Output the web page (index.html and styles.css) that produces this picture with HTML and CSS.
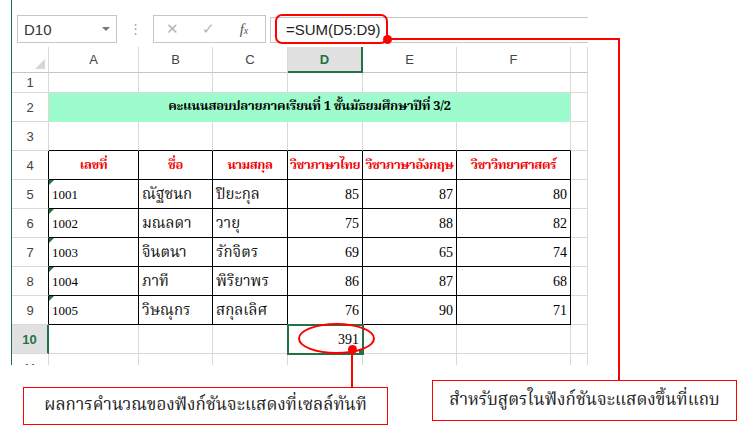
FILE: index.html
```html
<!DOCTYPE html>
<html lang="th">

<head>
    <meta charset="UTF-8">
    <meta name="viewport" content="width=device-width, initial-scale=1.0">
    <title>ฟังก์ชัน SUM</title>
    <link rel="stylesheet" href="styles.css">
</head>

<body>
    <div class="page">
        <div class="sheet">
            <div class="formula-row">
                <div class="name-box"><span>D10</span><span class="drop"></span></div>
                <div class="grip">&#8942;</div>
                <div class="fn-buttons">
                    <span class="btn-cancel">&#10005;</span>
                    <span class="btn-enter">&#10003;</span>
                    <span class="btn-fx"><i>f</i><sub>x</sub></span>
                </div>
                <div class="formula-input">=SUM(D5:D9)</div>
            </div>
            <table class="grid">
                <colgroup>
                    <col style="width: 37px">
                    <col style="width: 90px">
                    <col style="width: 74px">
                    <col style="width: 75px">
                    <col style="width: 75px">
                    <col style="width: 94px">
                    <col style="width: 114px">
                    <col style="width: 17px">
                </colgroup>
                <tr class="col-heads">
                    <th class="corner"><span></span></th>
                    <th>A</th>
                    <th>B</th>
                    <th>C</th>
                    <th class="active">D</th>
                    <th>E</th>
                    <th>F</th>
                    <th></th>
                </tr>
                <tr class="short">
                    <th>1</th>
                    <td></td><td></td><td></td><td></td><td></td><td></td><td></td>
                </tr>
                <tr>
                    <th>2</th>
                    <td colspan="6" class="title">คะแนนสอบปลายภาคเรียนที่ 1 ชั้นมัธยมศึกษาปีที่ 3/2</td>
                    <td></td>
                </tr>
                <tr class="above-box">
                    <th>3</th>
                    <td></td><td></td><td></td><td></td><td></td><td></td><td></td>
                </tr>
                <tr class="box head">
                    <th>4</th>
                    <td>เลขที่</td>
                    <td>ชื่อ</td>
                    <td>นามสกุล</td>
                    <td>วิชาภาษาไทย</td>
                    <td>วิชาภาษาอังกฤษ</td>
                    <td>วิชาวิทยาศาสตร์</td>
                    <td class="out"></td>
                </tr>
                <tr class="box">
                    <th>5</th>
                    <td class="id">1001</td><td>ณัฐชนก</td><td>ปิยะกุล</td>
                    <td class="num">85</td><td class="num">87</td><td class="num">80</td>
                    <td class="out"></td>
                </tr>
                <tr class="box">
                    <th>6</th>
                    <td class="id">1002</td><td>มณลดา</td><td>วายุ</td>
                    <td class="num">75</td><td class="num">88</td><td class="num">82</td>
                    <td class="out"></td>
                </tr>
                <tr class="box">
                    <th>7</th>
                    <td class="id">1003</td><td>จินตนา</td><td>รักจิตร</td>
                    <td class="num">69</td><td class="num">65</td><td class="num">74</td>
                    <td class="out"></td>
                </tr>
                <tr class="box">
                    <th>8</th>
                    <td class="id">1004</td><td>ภาที</td><td>พิริยาพร</td>
                    <td class="num">86</td><td class="num">87</td><td class="num">68</td>
                    <td class="out"></td>
                </tr>
                <tr class="box">
                    <th>9</th>
                    <td class="id">1005</td><td>วิษณุกร</td><td>สกุลเลิศ</td>
                    <td class="num">76</td><td class="num">90</td><td class="num">71</td>
                    <td class="out"></td>
                </tr>
                <tr>
                    <th class="active">10</th>
                    <td></td><td></td><td></td>
                    <td class="num selected">391</td>
                    <td></td><td></td><td></td>
                </tr>
                <tr>
                    <th>11</th>
                    <td></td><td></td><td></td><td></td><td></td><td></td><td></td>
                </tr>
            </table>
        </div>

        <!-- callouts drawn on top of the sheet -->
        <div class="mark formula-mark"></div>
        <div class="dot formula-dot"></div>
        <div class="wire wire-top"></div>
        <div class="wire wire-right"></div>
        <div class="note note-right">สำหรับสูตรในฟังก์ชันจะแสดงขึ้นที่แถบ</div>

        <div class="mark result-mark"></div>
        <div class="dot result-dot"></div>
        <div class="wire wire-down"></div>
        <div class="note note-left">ผลการคำนวณของฟังก์ชันจะแสดงที่เซลล์ทันที</div>
    </div>
</body>

</html>
```

FILE: styles.css
```css
body {
    margin: 0;
    background-color: white;
    font-family: "Liberation Sans", Arial, sans-serif;
}

.page {
    position: relative;
    width: 741px;
    height: 427px;
    overflow: hidden;
}

.sheet {
    margin-left: 11px;
    width: 576px;
    height: 365px;
    border-left: 1px solid #217346;
    overflow: hidden;
}

/* formula bar */
.formula-row {
    display: flex;
    align-items: flex-start;
    height: 47px;
    padding-top: 15px;
    box-sizing: border-box;
}

.name-box {
    display: flex;
    align-items: center;
    margin-left: 5px;
    width: 100px;
    height: 28px;
    padding-left: 6px;
    box-sizing: border-box;
    border: 1px solid #c6c6c6;
    font-size: 15px;
    color: #333;
}

.drop {
    margin-left: auto;
    margin-right: 6px;
    border-left: 4px solid transparent;
    border-right: 4px solid transparent;
    border-top: 4px solid #777;
}

.grip {
    width: 36px;
    line-height: 28px;
    text-align: center;
    color: #aaa;
    font-size: 13px;
}

.fn-buttons {
    display: flex;
    align-items: center;
    width: 113px;
    height: 28px;
    box-sizing: border-box;
    border: 1px solid #c6c6c6;
}

.fn-buttons span {
    width: 36px;
    text-align: center;
    color: #b5b5b5;
    font-size: 15px;
}

.fn-buttons .btn-fx {
    color: #555;
    font-family: "Liberation Serif", serif;
    font-size: 15px;
}

.btn-fx sub {
    font-style: italic;
    font-size: 10px;
    vertical-align: 0;
}

.formula-input {
    margin-left: 4px;
    width: 318px;
    height: 26px;
    margin-top: 2px;
    padding-left: 15px;
    box-sizing: border-box;
    border-top: 1px solid #c6c6c6;
    border-bottom: 1px solid #c6c6c6;
    border-left: 1px solid #c6c6c6;
    line-height: 24px;
    font-size: 15px;
    color: #222;
}

/* grid */
.grid {
    table-layout: fixed;
    width: 576px;
    border-collapse: separate;
    border-spacing: 0;
}

.grid th,
.grid td {
    padding: 0 3px;
    height: 29px;
    box-sizing: border-box;
    border-right: 1px solid #d9d9d9;
    border-bottom: 1px solid #d9d9d9;
    white-space: nowrap;
    overflow: hidden;
}

.grid th {
    font-weight: normal;
    font-size: 13px;
    color: #444;
    text-align: center;
    padding: 0;
}

.col-heads th {
    height: 26px;
    border-bottom-color: #c6c6c6;
}

.col-heads th.active,
.grid th.active {
    background-color: #e1e1e1;
    color: #217346;
    font-weight: bold;
}

.col-heads th.active {
    border-bottom: 2px solid #217346;
}

.grid tr th.active {
    border-right: 2px solid #217346;
}

.corner {
    position: relative;
}

.corner span {
    position: absolute;
    right: 3px;
    bottom: 3px;
    border-left: 10px solid transparent;
    border-bottom: 10px solid #d6d6d6;
}

.grid tr.short th,
.grid tr.short td {
    height: 20px;
}

.grid td {
    font-family: "Noto Serif Thai", "Noto Sans Thai", "Liberation Serif", serif;
    font-size: 15px;
    line-height: 1.2;
    color: #111;
    vertical-align: middle;
    padding-top: 2px;
}

.grid td.title {
    background-color: #9dfccb;
    border-bottom-color: #9dfccb;
    text-align: center;
    font-weight: bold;
    font-size: 13px;
    letter-spacing: -0.3px;
    color: #000;
    padding: 0;
}

/* black box round rows 4-9 */
.above-box td:not(:last-child) {
    border-bottom-color: #000;
}

.box th {
    border-right-color: #000;
}

.box td:not(.out) {
    border-right-color: #000;
    border-bottom-color: #000;
}

.box td.id {
    position: relative;
    font-family: "Liberation Serif", serif;
    font-size: 13px;
    color: #000;
}

.box td.id::before {
    content: '';
    position: absolute;
    left: 0;
    top: 0;
    border-right: 5px solid transparent;
    border-top: 5px solid #217346;
}

.head td {
    color: #f20000;
    font-weight: bold;
    text-align: center;
    font-size: 13px;
    letter-spacing: -0.5px;
    padding: 1px 0 0 0;
}

.grid td.num {
    text-align: right;
    font-family: "Liberation Serif", serif;
    font-size: 14px;
    color: #000;
}

.grid td.selected {
    position: relative;
    outline: 2px solid #217346;
    outline-offset: -1px;
}

.grid td.selected::after {
    content: '';
    position: absolute;
    right: -3px;
    bottom: -3px;
    width: 5px;
    height: 5px;
    background-color: #217346;
    border: 1px solid white;
}

/* red callouts */
.mark {
    position: absolute;
    border: 2px solid #f00;
    box-sizing: border-box;
}

.formula-mark {
    left: 275px;
    top: 14px;
    width: 113px;
    height: 30px;
    border-radius: 7px;
}

.result-mark {
    left: 298px;
    top: 323px;
    width: 77px;
    height: 31px;
    border-radius: 50%;
}

.dot {
    position: absolute;
    width: 9px;
    height: 9px;
    border-radius: 50%;
    background-color: #f00;
}

.formula-dot {
    left: 383px;
    top: 35px;
}

.result-dot {
    left: 348px;
    top: 345px;
}

.wire {
    position: absolute;
    background-color: #f00;
}

.wire-top {
    left: 387px;
    top: 38px;
    width: 233px;
    height: 2px;
}

.wire-right {
    left: 618px;
    top: 38px;
    width: 2px;
    height: 342px;
}

.wire-down {
    left: 351px;
    top: 349px;
    width: 2px;
    height: 38px;
}

.note {
    position: absolute;
    border: 1px solid #f00;
    box-sizing: border-box;
    background-color: white;
    text-align: center;
    font-family: "Noto Serif Thai", "Noto Sans Thai", "Liberation Serif", serif;
    font-size: 17px;
    color: #222;
}

.note-right {
    left: 432px;
    top: 380px;
    width: 305px;
    height: 41px;
    line-height: 39px;
}

.note-left {
    left: 23px;
    top: 387px;
    width: 365px;
    height: 38px;
    line-height: 36px;
}
```
